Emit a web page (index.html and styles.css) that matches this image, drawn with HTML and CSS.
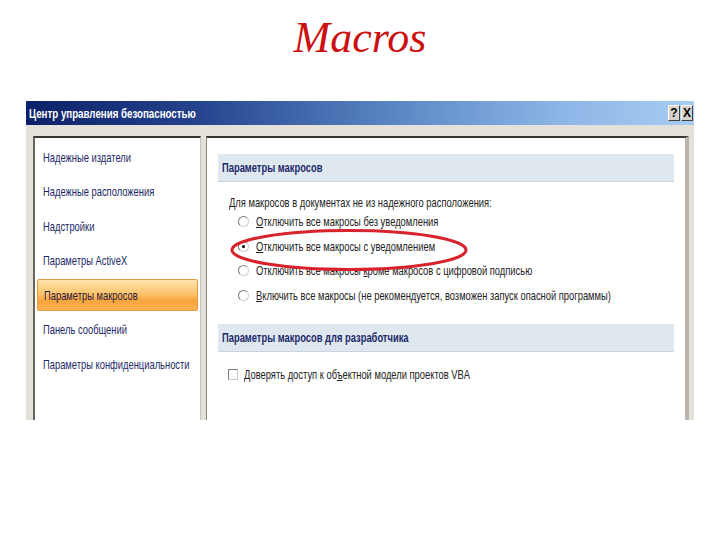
FILE: index.html
```html
<!DOCTYPE html>
<html lang="ru">
<head>
<meta charset="utf-8">
<title>Macros</title>
<link rel="stylesheet" href="styles.css">
</head>
<body>
<h1 class="slide-title">Macros</h1>
<div class="dialog">
  <div class="titlebar">
    <span class="titlebar-text t">Центр управления безопасностью</span>
    <div class="titlebar-buttons">
      <span class="tb-btn">?</span>
      <span class="tb-btn">X</span>
    </div>
  </div>
  <div class="dialog-body">
    <ul class="nav">
      <li class="nav-item"><span class="t">Надежные издатели</span></li>
      <li class="nav-item"><span class="t">Надежные расположения</span></li>
      <li class="nav-item"><span class="t">Надстройки</span></li>
      <li class="nav-item"><span class="t">Параметры ActiveX</span></li>
      <li class="nav-item selected"><span class="sel-bar"><span class="t">Параметры макросов</span></span></li>
      <li class="nav-item"><span class="t">Панель сообщений</span></li>
      <li class="nav-item"><span class="t">Параметры конфиденциальности</span></li>
    </ul>
    <div class="content">
      <div class="section-head"><span class="t">Параметры макросов</span></div>
      <div class="intro"><span class="t">Для макросов в документах не из надежного расположения:</span></div>
      <div class="options">
        <div class="option"><span class="radio"></span><span class="t"><u>О</u>тключить все макросы без уведомления</span></div>
        <div class="option"><span class="radio checked"></span><span class="t"><u>О</u>тключить все макросы с уведомлением</span></div>
        <div class="option"><span class="radio"></span><span class="t">Отключить все макросы <u>к</u>роме макросов с цифровой подписью</span></div>
        <div class="option"><span class="radio"></span><span class="t"><u>В</u>ключить все макросы (не рекомендуется, возможен запуск опасной программы)</span></div>
      </div>
      <div class="section-head second"><span class="t">Параметры макросов для разработчика</span></div>
      <div class="check-row"><span class="checkbox"></span><span class="t">Доверять доступ к об<u>ъ</u>ектной модели проектов VBA</span></div>
    </div>
    <svg class="highlight" width="242" height="46" viewBox="0 0 242 46">
      <ellipse cx="120" cy="21" rx="117" ry="19.5" fill="none" stroke="#d8222c" stroke-width="3"/>
    </svg>
  </div>
</div>
</body>
</html>
```
FILE: styles.css
```css
html, body {
  margin: 0;
  padding: 0;
  background: #ffffff;
}
body {
  width: 720px;
  height: 540px;
  overflow: hidden;
  font-family: "Liberation Sans", Arial, sans-serif;
}
.t {
  display: inline-block;
  white-space: nowrap;
  transform: scaleX(0.72);
  transform-origin: left center;
}
.slide-title {
  margin: 0;
  height: 101px;
  box-sizing: border-box;
  padding-top: 14px;
  text-align: center;
  font-family: "Liberation Serif", serif;
  font-style: italic;
  font-weight: normal;
  font-size: 44px;
  line-height: 48px;
  color: #cc1010;
}
.dialog {
  margin-left: 26px;
  width: 668px;
  height: 319px;
  overflow: hidden;
  background: #e4e1da;
}
.titlebar {
  height: 24px;
  display: flex;
  align-items: center;
  justify-content: space-between;
  padding: 0 1px 0 3px;
  background: linear-gradient(to right, #0c2167 0%, #24428c 25%, #5a86c4 55%, #8db5e6 80%, #a8ccf2 100%);
}
.titlebar-text {
  color: #ffffff;
  font-weight: bold;
  font-size: 13.5px;
}
.titlebar-buttons {
  display: flex;
  gap: 1px;
}
.tb-btn {
  width: 12px;
  height: 16px;
  box-sizing: border-box;
  background: #d6d3cc;
  border: 1px solid;
  border-color: #ffffff #404040 #404040 #ffffff;
  font-weight: bold;
  font-size: 12px;
  line-height: 14px;
  text-align: center;
  color: #000;
}
.dialog-body {
  position: relative;
  display: flex;
  gap: 5px;
  padding: 11px 0 0 7px;
  height: 295px;
  box-sizing: border-box;
}
.nav {
  list-style: none;
  margin: 0;
  padding: 2px 2px 0 2px;
  width: 168px;
  box-sizing: border-box;
  background: #ffffff;
  border-top: 2px solid #3c3630;
  border-left: 2px solid #6a6560;
  border-right: 1px solid #c8c4bc;
}
.nav-item {
  height: 34.5px;
  display: flex;
  align-items: center;
  padding-left: 6px;
  font-size: 13px;
  color: #1c2866;
}
.nav-item.selected {
  padding-left: 0;
}
.sel-bar {
  flex: 1;
  height: 30px;
  display: flex;
  align-items: center;
  padding-left: 6px;
  border: 1px solid #e99a3a;
  border-radius: 2px;
  background: linear-gradient(to bottom, #fde4ae 0%, #fbc46e 45%, #f8a43c 70%, #f9b455 100%);
  color: #2a2040;
}
.content {
  width: 483px;
  box-sizing: border-box;
  background: #ffffff;
  border-top: 2px solid #3c3630;
  border-left: 1px solid #8a857e;
  border-right: 4px solid #b9b5ad;
  padding: 16px 11px 0 11px;
}
.section-head {
  height: 27px;
  display: flex;
  align-items: center;
  padding-left: 4px;
  background: #dfe7ef;
  border-bottom: 1px solid #c9d4df;
  font-size: 13px;
  font-weight: bold;
  color: #1c2a6a;
}
.section-head.second {
  margin-top: 16px;
}
.intro {
  margin-top: 13px;
  padding-left: 11px;
  font-size: 13px;
  line-height: 16px;
  color: #222;
}
.options {
  margin-top: -2px;
  padding-left: 20px;
}
.option {
  height: 24.7px;
  display: flex;
  align-items: center;
  gap: 7px;
  font-size: 13px;
  color: #222;
}
.radio {
  width: 11px;
  height: 11px;
  box-sizing: border-box;
  border-radius: 50%;
  border: 1px solid;
  border-color: #7a7a7a #d0d0d0 #d0d0d0 #7a7a7a;
  background: #ffffff;
  position: relative;
  flex: none;
}
.radio.checked::after {
  content: "";
  position: absolute;
  left: 3px;
  top: 3px;
  width: 3px;
  height: 3px;
  border-radius: 50%;
  background: #000;
}
.check-row {
  margin-top: 15px;
  padding-left: 10px;
  display: flex;
  align-items: center;
  gap: 6px;
  font-size: 13px;
  color: #222;
}
.checkbox {
  width: 10px;
  height: 11px;
  box-sizing: border-box;
  border: 1px solid;
  border-color: #7a7a7a #c8c8c8 #c8c8c8 #7a7a7a;
  background: #fff;
  flex: none;
}
.highlight {
  position: absolute;
  left: 203px;
  top: 104px;
}
```
